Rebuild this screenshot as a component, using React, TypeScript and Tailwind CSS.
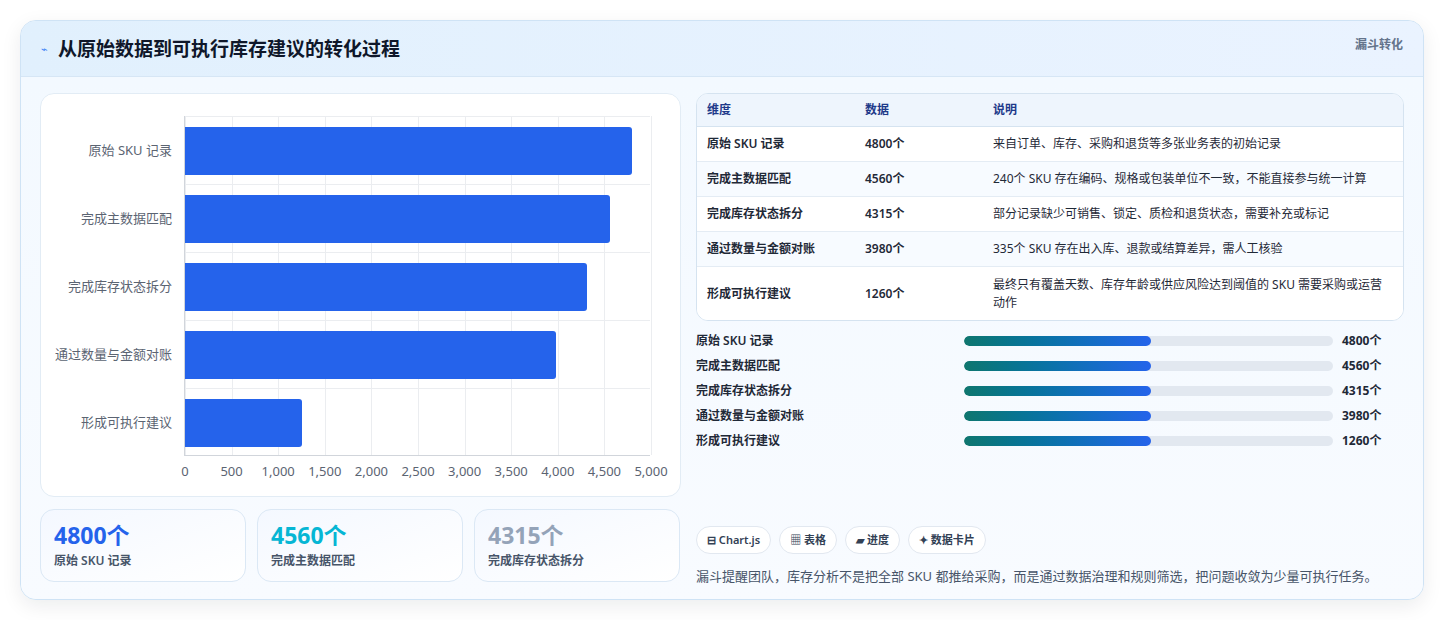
const F = { fontFamily: '"Noto Sans","Noto Sans CJK SC",sans-serif' };
const rows = [
  ['原始 SKU 记录', 4800, '来自订单、库存、采购和退货等多张业务表的初始记录'],
  ['完成主数据匹配', 4560, '240个 SKU 存在编码、规格或包装单位不一致，不能直接参与统一计算'],
  ['完成库存状态拆分', 4315, '部分记录缺少可销售、锁定、质检和退货状态，需要补充或标记'],
  ['通过数量与金额对账', 3980, '335个 SKU 存在出入库、退款或结算差异，需人工核验'],
  ['形成可执行建议', 1260, '最终只有覆盖天数、库存年龄或供应风险达到阈值的 SKU 需要采购或运营动作'],
] as const;
const ticks = ['0', '500', '1,000', '1,500', '2,000', '2,500', '3,000', '3,500', '4,000', '4,500', '5,000'];

export default function App() {
  return (
    <div style={F} className="w-[1444px] h-[620px] bg-white pt-[20px] px-[20px]">
      <div className="w-[1404px] h-[580px] rounded-[16px] border border-[#cfe3f5] bg-[#f5faff] shadow-[0_6px_20px_rgba(15,23,42,0.08)] overflow-hidden flex flex-col">
        <div className="h-[56px] shrink-0 bg-gradient-to-r from-[#e1f0fd] to-[#eaf3ff] border-b border-[#d6e6f5] flex items-start justify-between px-[20px]">
          <div className="flex items-center gap-[10px] h-[56px]">
            <span className="text-[#3b82f6] text-[11px]">⌁</span>
            <span className="text-[19px] font-bold text-[#0f172a]">从原始数据到可执行库存建议的转化过程</span>
          </div>
          <span className="text-[12px] font-bold text-[#64748b] mt-[15px]">漏斗转化</span>
        </div>
        <div className="flex px-[19px] pt-[16px] gap-[15px] bg-gradient-to-b from-[#f3f9ff] to-[#f8fbff] flex-1">
          <div className="w-[641px] flex flex-col gap-[12px]">
            <div className="h-[404px] bg-white rounded-[14px] border border-[#e2ecf5] relative">
              <div className="absolute left-[143px] top-[22px] w-[466px] h-[340px] border-l border-b border-[#d1d5db]">
                {ticks.map((_, i) => (
                  <div key={i} className="absolute top-0 bottom-0 border-l border-[#ebedf0]" style={{ left: i * 46.6 }} />
                ))}
                {rows.map((r, i) => (
                  <div key={i} className="absolute left-0 border-t border-[#ebedf0] w-full" style={{ top: i * 68 }}>
                    <div className="absolute left-0 top-[10px] h-[48px] bg-[#2563eb] rounded-r-[3px]" style={{ width: (r[1] / 5000) * 466 }} />
                    <div className="absolute right-[478px] top-[24px] whitespace-nowrap text-[13px] text-[#5b6472]">{r[0]}</div>
                  </div>
                ))}
                {ticks.map((t, i) => (
                  <div key={t} className="absolute top-[346px] text-[13px] text-[#5b6472] -translate-x-1/2" style={{ left: i * 46.6 }}>{t}</div>
                ))}
              </div>
            </div>
            <div className="flex gap-[11px]">
              {[['4800个', 'text-[#2563eb]', '原始 SKU 记录'], ['4560个', 'text-[#06b6d4]', '完成主数据匹配'], ['4315个', 'text-[#94a3b8]', '完成库存状态拆分']].map(([v, c, l]) => (
                <div key={v} className="w-[206px] h-[73px] rounded-[14px] border border-[#dbe8f5] bg-gradient-to-br from-[#f4f8ff] to-white px-[13px] pt-[10px]">
                  <div className={`text-[23px] leading-[30px] font-bold ${c}`}>{v}</div>
                  <div className="text-[12px] font-semibold text-[#475569] mt-[2px]">{l}</div>
                </div>
              ))}
            </div>
          </div>
          <div className="flex-1 flex flex-col">
            <div className="rounded-[12px] border border-[#d5e3f0] bg-white overflow-hidden">
              <div className="flex h-[33px] items-center bg-[#eef5fd] border-b border-[#d5e3f0] text-[12px] font-bold text-[#1e3a8a]">
                <div className="w-[168px] pl-[10px]">维度</div><div className="w-[128px]">数据</div><div>说明</div>
              </div>
              {rows.map((r, i) => (
                <div key={i} className={`flex items-center text-[12px] text-[#1f2937] ${i < 4 ? 'h-[35px] border-b border-[#e4ecf4]' : 'h-[53px]'} ${i % 2 ? 'bg-[#f7fbff]' : 'bg-white'}`}>
                  <div className="w-[168px] pl-[10px] font-semibold">{r[0]}</div>
                  <div className="w-[128px] font-semibold">{r[1]}个</div>
                  <div className="flex-1 pr-[12px] leading-[18px]">{r[2]}</div>
                </div>
              ))}
            </div>
            <div className="mt-[10px] flex flex-col gap-[6px]">
              {rows.map((r, i) => (
                <div key={i} className="flex items-center h-[19px] text-[12px]">
                  <div className="w-[268px] font-semibold text-[#1f2937]">{r[0]}</div>
                  <div className="w-[369px] h-[10px] rounded-full bg-[#e2e8f0] overflow-hidden">
                    <div className="h-full w-[187px] rounded-full bg-gradient-to-r from-[#0f766e] to-[#2563eb]" />
                  </div>
                  <div className="ml-[9px] font-bold text-[#1f2937]">{r[1]}个</div>
                </div>
              ))}
            </div>
            <div className="mt-[76px] flex gap-[8px]">
              {['⊟ Chart.js', '▦ 表格', '▰ 进度', '✦ 数据卡片'].map(c => (
                <div key={c} className="h-[28px] px-[10px] rounded-full border border-[#e2e8f0] bg-white flex items-center text-[11px] font-semibold text-[#334155]">{c}</div>
              ))}
            </div>
            <div className="mt-[13px] text-[13px] text-[#475569]">漏斗提醒团队，库存分析不是把全部 SKU 都推给采购，而是通过数据治理和规则筛选，把问题收敛为少量可执行任务。</div>
          </div>
        </div>
      </div>
    </div>
  );
}
